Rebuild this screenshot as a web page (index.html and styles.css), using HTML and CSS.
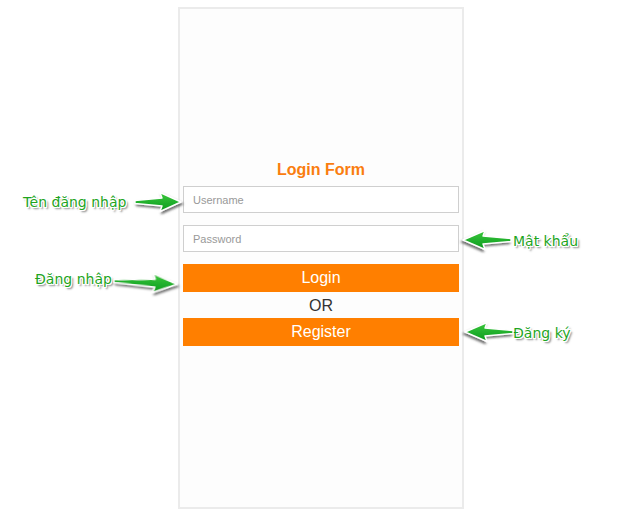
FILE: index.html
```html
<!DOCTYPE html>
<html lang="vi">
<head>
<meta charset="utf-8">
<title>Login Form</title>
<link rel="stylesheet" href="styles.css">
</head>
<body>
<div class="panel">
  <h1 class="title">Login Form</h1>
  <input class="field" type="text" placeholder="Username">
  <input class="field" type="password" placeholder="Password">
  <button class="btn btn-login">Login</button>
  <div class="or">OR</div>
  <button class="btn">Register</button>
</div>

<svg width="0" height="0" class="defs">
  <defs>
    <linearGradient id="g" x1="0" y1="0" x2="0" y2="1">
      <stop offset="0" stop-color="#3cc83c"/>
      <stop offset="1" stop-color="#0a9a1e"/>
    </linearGradient>
    <filter id="sh" x="-20%" y="-30%" width="150%" height="180%">
      <feDropShadow dx="1.5" dy="2" stdDeviation="1.2" flood-color="#444" flood-opacity="0.75"/>
    </filter>
  </defs>
</svg>

<span class="note note-user">Tên đăng nhập</span>
<svg class="arrow arrow-user" width="52" height="24" viewBox="0 0 52 24">
  <polygon points="1,9.5 28,7 26,1.5 47,11 26,20.5 28,15 1,12.5" fill="url(#g)" stroke="#fff" stroke-width="1.4" stroke-linejoin="round" filter="url(#sh)"/>
</svg>

<span class="note note-pass">Mật khẩu</span>
<svg class="arrow arrow-pass" width="54" height="24" viewBox="0 0 54 24">
  <polygon points="1,9.5 29,7 27,1.5 49,11 27,20.5 29,15 1,12.5" fill="url(#g)" stroke="#fff" stroke-width="1.4" stroke-linejoin="round" filter="url(#sh)"/>
</svg>

<span class="note note-login">Đăng nhập</span>
<svg class="arrow arrow-login" width="70" height="24" viewBox="0 0 70 24">
  <polygon points="1,9.5 42,7 40,1.5 64,11 40,20.5 42,15 1,12.5" fill="url(#g)" stroke="#fff" stroke-width="1.4" stroke-linejoin="round" filter="url(#sh)"/>
</svg>

<span class="note note-reg">Đăng ký</span>
<svg class="arrow arrow-reg" width="54" height="24" viewBox="0 0 54 24">
  <polygon points="1,9.5 29,7 27,1.5 49,11 27,20.5 29,15 1,12.5" fill="url(#g)" stroke="#fff" stroke-width="1.4" stroke-linejoin="round" filter="url(#sh)"/>
</svg>
</body>
</html>
```

FILE: styles.css
```css
html, body {
  margin: 0;
  padding: 0;
  background: #ffffff;
}

body {
  width: 640px;
  height: 517px;
  overflow: hidden;
  font-family: "Liberation Sans", Arial, sans-serif;
}

.panel {
  box-sizing: border-box;
  width: 286px;
  height: 502px;
  margin: 7px 0 0 178px;
  padding: 152px 3px 0;
  border: 2px solid #ebebeb;
  background: #fdfdfd;
  display: flex;
  flex-direction: column;
}

.title {
  margin: 0 0 7px;
  font-size: 16px;
  line-height: 18px;
  font-weight: bold;
  color: #fa7d0f;
  text-align: center;
}

.field {
  box-sizing: border-box;
  width: 276px;
  height: 27px;
  margin: 0 0 12px;
  padding: 0 9px;
  border: 1px solid #cfcfcf;
  background: #ffffff;
  font-family: "Liberation Sans", Arial, sans-serif;
  font-size: 11px;
  color: #333;
  outline: none;
}

.field::placeholder {
  color: #999999;
}

.btn {
  box-sizing: border-box;
  width: 276px;
  height: 28px;
  margin: 0;
  padding: 0;
  border: none;
  background: #ff7f00;
  color: #ffffff;
  font-family: "Liberation Sans", Arial, sans-serif;
  font-size: 16px;
  line-height: 28px;
  cursor: pointer;
}

.or {
  height: 26px;
  line-height: 27px;
  text-align: center;
  font-size: 16px;
  color: #333333;
}

.defs {
  position: absolute;
  width: 0;
  height: 0;
}

.note {
  position: absolute;
  font-family: "DejaVu Sans", Verdana, sans-serif;
  font-size: 14px;
  line-height: 16px;
  color: #1ea51e;
  white-space: nowrap;
  text-shadow:
    1px 0 0 #fff, -1px 0 0 #fff, 0 1px 0 #fff, 0 -1px 0 #fff,
    1px 1px 0 #fff, -1px -1px 0 #fff, 1px -1px 0 #fff, -1px 1px 0 #fff,
    2px 2px 2px #666;
}

.note-user { left: 23px; top: 194px; }
.note-login { left: 35px; top: 271px; }
.note-pass { left: 513px; top: 233px; }
.note-reg { left: 513px; top: 325px; }

.arrow {
  position: absolute;
  overflow: visible;
}

.arrow-user { left: 134px; top: 191px; }
.arrow-login { left: 113px; top: 270px; transform: rotate(3deg); transform-origin: 0 50%; }
.arrow-pass { left: 458px; top: 229px; transform: scaleX(-1); }
.arrow-reg { left: 460px; top: 321px; transform: scaleX(-1); }
```
